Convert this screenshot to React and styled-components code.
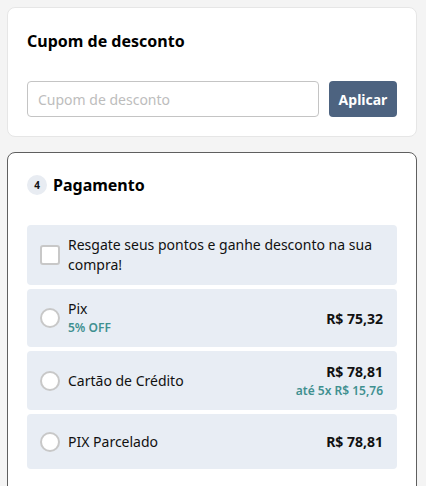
import React from 'react';
import styled, { createGlobalStyle } from 'styled-components';

const GlobalStyle = createGlobalStyle`
  * {
    box-sizing: border-box;
  }

  body {
    margin: 0;
    background: #f4f4f4;
    font-family: 'Noto Sans', 'Open Sans', sans-serif;
    color: #111;
  }
`;

const options = [
  { id: 'pix', label: 'Pix', note: '5% OFF', price: 'R$ 75,32' },
  {
    id: 'card',
    label: 'Cartão de Crédito',
    price: 'R$ 78,81',
    installments: 'até 5x R$ 15,76',
  },
  { id: 'pix-parcelado', label: 'PIX Parcelado', price: 'R$ 78,81' },
];

const App = () => (
  <>
    <GlobalStyle />
    <StyledPage>
      <StyledCard>
        <StyledTitle>Cupom de desconto</StyledTitle>
        <StyledCouponForm onSubmit={e => e.preventDefault()}>
          <StyledInput placeholder="Cupom de desconto" />
          <StyledButton type="submit">Aplicar</StyledButton>
        </StyledCouponForm>
      </StyledCard>

      <StyledCard $active>
        <StyledStepHeader>
          <StyledStepNumber>4</StyledStepNumber>
          <StyledTitle>Pagamento</StyledTitle>
        </StyledStepHeader>

        <StyledOptions>
          <StyledOption>
            <StyledCheckbox />
            <StyledLabel>
              Resgate seus pontos e ganhe desconto na sua compra!
            </StyledLabel>
          </StyledOption>

          {options.map(option => (
            <StyledOption key={option.id}>
              <StyledRadio />
              <StyledOptionText>
                <StyledLabel>{option.label}</StyledLabel>
                {option.note && <StyledNote>{option.note}</StyledNote>}
              </StyledOptionText>
              <StyledPrice>
                <strong>{option.price}</strong>
                {option.installments && (
                  <StyledNote>{option.installments}</StyledNote>
                )}
              </StyledPrice>
            </StyledOption>
          ))}
        </StyledOptions>
      </StyledCard>
    </StyledPage>
  </>
);

const StyledPage = styled.div`
  display: flex;
  flex-direction: column;
  gap: 15px;
  padding: 7px 9px 0 7px;
  height: 486px;
  overflow: hidden;
`;

const StyledCard = styled.section`
  flex-shrink: 0;
  background: #fff;
  border: 1px solid ${({ $active }) => ($active ? '#5f5f5f' : '#e6e6e6')};
  border-radius: 8px;
  padding: ${({ $active }) => ($active ? '20px 19px 40px' : '21px 19px 19px')};
`;

const StyledTitle = styled.h2`
  margin: 0;
  font-size: 16px;
  line-height: 24px;
  font-weight: 700;
  color: #000;
`;

const StyledCouponForm = styled.form`
  display: flex;
  gap: 10px;
  margin-top: 28px;
`;

const StyledInput = styled.input`
  flex: 1;
  min-width: 0;
  height: 36px;
  padding: 0 10px;
  border: 1px solid #c4c4c4;
  border-radius: 4px;
  font-family: inherit;
  font-size: 14px;
  color: #333;

  &::placeholder {
    color: #bdbdbd;
  }
`;

const StyledButton = styled.button`
  width: 68px;
  height: 36px;
  border: 0;
  border-radius: 4px;
  background: #4d6380;
  color: #fff;
  font-family: inherit;
  font-size: 14px;
  font-weight: 700;
`;

const StyledStepHeader = styled.div`
  display: flex;
  align-items: center;
  gap: 6px;
`;

const StyledStepNumber = styled.span`
  display: flex;
  align-items: center;
  justify-content: center;
  width: 20px;
  height: 20px;
  border-radius: 50%;
  background: #e8ecf2;
  font-size: 10px;
  font-weight: 700;
`;

const StyledOptions = styled.div`
  display: flex;
  flex-direction: column;
  gap: 4px;
  margin-top: 28px;
`;

const StyledOption = styled.label`
  display: flex;
  align-items: center;
  gap: 8px;
  min-height: 55px;
  padding: 10px 14px 10px 13px;
  border-radius: 4px;
  background: #e8edf4;
`;

const StyledCheckbox = styled.span`
  flex-shrink: 0;
  width: 20px;
  height: 20px;
  border: 2px solid #c8c8c8;
  border-radius: 3px;
  background: #fff;
`;

const StyledRadio = styled(StyledCheckbox)`
  border-radius: 50%;
`;

const StyledOptionText = styled.div`
  display: flex;
  flex-direction: column;
  flex: 1;
`;

const StyledLabel = styled.span`
  font-size: 14px;
  line-height: 20px;
  color: #111;
`;

const StyledNote = styled.span`
  font-size: 12px;
  line-height: 18px;
  font-weight: 600;
  color: #3f9090;
`;

const StyledPrice = styled.div`
  display: flex;
  flex-direction: column;
  align-items: flex-end;
  font-size: 14px;
  line-height: 21px;
  color: #111;
`;

export default App;
